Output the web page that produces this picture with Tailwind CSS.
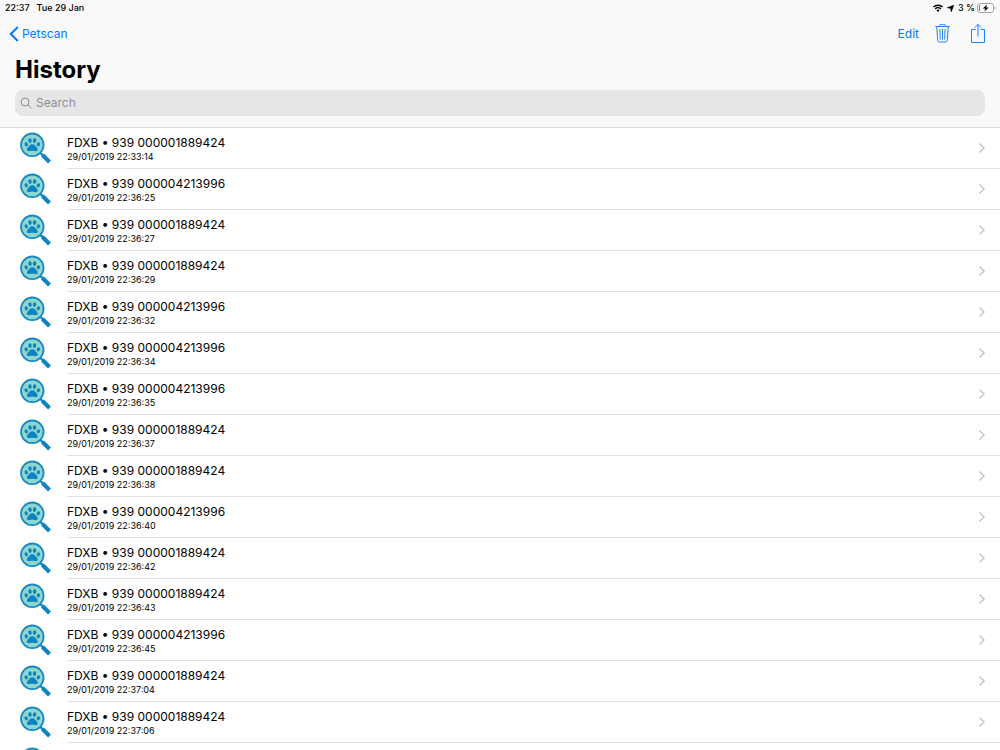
<!DOCTYPE html>
<html lang="en">
<head>
  <meta charset="UTF-8" />
  <meta name="viewport" content="width=device-width, initial-scale=1.0" />
  <title>History</title>
  <script src="https://cdn.jsdelivr.net/npm/@tailwindcss/browser@4"></script>
</head>
<body class="h-screen overflow-hidden flex flex-col bg-white text-black font-['Inter','Liberation_Sans',sans-serif]">

  <!-- Shared icons -->
  <svg class="hidden">
    <symbol id="icon-scan" viewBox="0 0 32 32">
      <path d="M20 20.500l4 4" stroke="#0b84c4" stroke-width="2.4" />
      <path d="M22.500 23l7 7" stroke="#0b84c4" stroke-width="4" />
      <circle cx="12.300" cy="12.800" r="11.300" fill="#8fd6cd" stroke="#1689c6" stroke-width="1.800" />
      <g fill="#0b84c4">
        <ellipse cx="6.200" cy="12.300" rx="1.600" ry="2.100" transform="rotate(-25 6.200 12.300)" />
        <ellipse cx="10" cy="8.600" rx="1.700" ry="2.400" transform="rotate(-8 10 8.600)" />
        <ellipse cx="14.600" cy="8.600" rx="1.700" ry="2.400" transform="rotate(8 14.600 8.600)" />
        <ellipse cx="18.400" cy="12.300" rx="1.600" ry="2.100" transform="rotate(25 18.400 12.300)" />
        <path d="M12.300 12.200c-2.300 0-3 1.600-3.900 2.700-1 1.100-1.900 1.800-1.400 3.200.5 1.300 1.900 1.300 3.100 1 1.400-.4 3-.4 4.400 0 1.200.3 2.600.3 3.100-1 .5-1.400-.4-2.100-1.400-3.200-.9-1.100-1.600-2.700-3.900-2.700z" />
      </g>
    </symbol>
    <symbol id="icon-chevron" viewBox="0 0 8 12">
      <path d="M1.500 1.500L6 6l-4.500 4.500" fill="none" stroke="#c7c7cc" stroke-width="1.500" />
    </symbol>
  </svg>

  <header class="shrink-0 bg-[#f9f9f9] border-b border-[#dcdcdd]">
    <!-- Status bar -->
    <div class="flex h-4 items-center justify-between pl-[5px] pr-1 text-[9px] font-medium">
      <div class="flex gap-[7px]">
        <span>22:37</span>
        <span>Tue 29 Jan</span>
      </div>
      <div class="flex items-center gap-1">
        <svg class="w-[10px] h-2" viewBox="0 0 10 8" fill="none" stroke="#000" stroke-width="1.400">
          <path d="M.5 3.100a6.400 6.400 0 0 1 9 0M2.200 4.900a4 4 0 0 1 5.600 0" />
          <path d="M5 7.900L3.500 6.300a2.100 2.100 0 0 1 3 0z" fill="#000" stroke="none" />
        </svg>
        <svg class="w-[7px] h-[7px]" viewBox="0 0 7 7"><path d="M7 0L4.300 7l-.8-3.500L0 2.700z" stroke="#000" stroke-width=".4" /></svg>
        <span class="-mr-[2px]">3 %</span>
        <svg class="w-[19px] h-[10px]" viewBox="0 0 19 10">
          <rect x=".5" y=".5" width="16" height="9" rx="2.500" fill="#fff" stroke="#a5a5a5" />
          <path d="M17.500 3.300c1.300.6 1.300 2.800 0 3.400z" fill="#a5a5a5" />
          <path d="M2 2h1v6H2z" fill="#ff3b30" />
          <path d="M10 1.500L5.800 5.600h2.400L7.400 8.600l4.300-4.200H9.200z" />
        </svg>
      </div>
    </div>

    <!-- Navigation bar -->
    <nav class="flex h-9 items-center justify-between pl-[9px] pr-[14px] text-xs text-[#007aff]">
      <a href="#" class="flex items-center gap-[3px]">
        <svg class="w-[10px] h-4" viewBox="0 0 10 16" fill="none" stroke="#007aff" stroke-width="2"><path d="M8.800 1L1.800 8l7 7" /></svg>
        Petscan
      </a>
      <div class="flex items-center">
        <button type="button" class="mr-4">Edit</button>
        <button type="button" aria-label="Delete" class="mr-5">
          <svg class="block w-[15px] h-5" viewBox="0 0 15 20" fill="none" stroke="#1c84fb">
            <path d="M.3 2.500h14.400M4.700 2.300V1.500q0-1.200 1.500-1.200h2.600q1.500 0 1.500 1.200v.8M1.700 2.700l1 13.600q.1 1.700 1.700 1.700h6.200q1.600 0 1.700-1.700l1-13.600M4.900 5l.4 10.600M7.500 5v10.600M10.100 5l-.4 10.600" />
          </svg>
        </button>
        <button type="button" aria-label="Share">
          <svg class="block w-4 h-5" viewBox="0 0 16 20" fill="none" stroke="#1c84fb">
            <path d="M5.500 5.500h-4v13h13v-13h-4M8 12.500V.5M4.800 3.500L8 .3l3.200 3.200" />
          </svg>
        </button>
      </div>
    </nav>

    <h1 class="px-[15px] text-2xl leading-9 font-bold">History</h1>

    <div class="px-[15px] pt-[2px] pb-[11px]">
      <label class="flex h-[26px] items-center gap-1 rounded-lg bg-[#e6e6e7] px-[5px]">
        <svg class="w-3 h-3" viewBox="0 0 12 12" fill="none" stroke="#8e8e93"><circle cx="5" cy="5" r="4" /><path d="M8 8l3.500 3.500" /></svg>
        <input type="text" aria-label="Search" placeholder="Search" class="grow bg-transparent text-xs placeholder-[#8e8e93] outline-none" />
      </label>
    </div>
  </header>

  <ul id="history" class="grow overflow-hidden"></ul>

  <template id="row">
    <li>
      <a href="#" class="flex h-[41px] pl-5">
        <svg class="mt-1 mr-[15px] w-8 h-8 shrink-0"><use href="#icon-scan" /></svg>
        <div class="flex grow items-center justify-between border-b border-[#e0e0e2] pr-[14px]">
          <div>
            <p class="code text-xs leading-[18px]"></p>
            <p class="time text-[9px] leading-[10px]"></p>
          </div>
          <svg class="w-2 h-3"><use href="#icon-chevron" /></svg>
        </div>
      </a>
    </li>
  </template>

  <script>
    const scans = [
      ["FDXB • 939 000001889424", "29/01/2019 22:33:14"],
      ["FDXB • 939 000004213996", "29/01/2019 22:36:25"],
      ["FDXB • 939 000001889424", "29/01/2019 22:36:27"],
      ["FDXB • 939 000001889424", "29/01/2019 22:36:29"],
      ["FDXB • 939 000004213996", "29/01/2019 22:36:32"],
      ["FDXB • 939 000004213996", "29/01/2019 22:36:34"],
      ["FDXB • 939 000004213996", "29/01/2019 22:36:35"],
      ["FDXB • 939 000001889424", "29/01/2019 22:36:37"],
      ["FDXB • 939 000001889424", "29/01/2019 22:36:38"],
      ["FDXB • 939 000004213996", "29/01/2019 22:36:40"],
      ["FDXB • 939 000001889424", "29/01/2019 22:36:42"],
      ["FDXB • 939 000001889424", "29/01/2019 22:36:43"],
      ["FDXB • 939 000004213996", "29/01/2019 22:36:45"],
      ["FDXB • 939 000001889424", "29/01/2019 22:37:04"],
      ["FDXB • 939 000001889424", "29/01/2019 22:37:06"],
      ["", ""],
    ];

    const list = document.getElementById("history");
    const template = document.getElementById("row");

    scans.forEach(([code, time]) => {
      const row = template.content.cloneNode(true);
      row.querySelector(".code").textContent = code;
      row.querySelector(".time").textContent = time;
      list.appendChild(row);
    });
  </script>
</body>
</html>
